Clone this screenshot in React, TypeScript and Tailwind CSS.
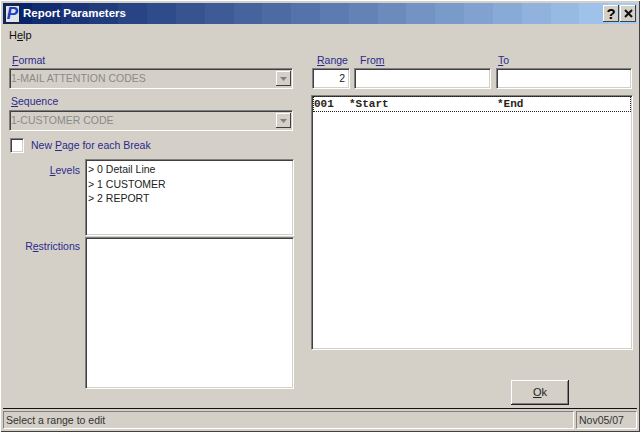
import React from 'react';

const sunken = 'border border-t-[#808080] border-l-[#808080] border-r-white border-b-white shadow-[inset_1px_1px_0_#404040,inset_-1px_-1px_0_#d4d0c8]';
const labelColor = 'text-[#2a2a8c]';

// title bar fades in visible bands, like a 256 colour capture
const bandCount = 22;
const titleBands = Array.from({ length: bandCount }, (_, i) => {
  const t = i / (bandCount - 1);
  const r = Math.round(10 + (166 - 10) * t);
  const g = Math.round(36 + (202 - 36) * t);
  const b = Math.round(106 + (240 - 106) * t);
  const from = (i / bandCount) * 100;
  const to = ((i + 1) / bandCount) * 100;
  return `rgb(${r},${g},${b}) ${from}% ${to}%`;
}).join(',');

const Field = ({ text, className }: { text?: string; className: string }) => (
  <div className={`${sunken} bg-white h-[21px] px-1 leading-[19px] text-right ${className}`}>{text}</div>
);

const Combo = ({ text }: { text: string }) => (
  <div className={`${sunken} bg-[#d4d0c8] h-[21px] w-[284px] ml-[6px] flex items-center justify-between pl-[1px] pr-[1px] text-[10.5px] text-[#8a8a86]`}>
    <span>{text}</span>
    <span className="w-[15px] h-[15px] bg-[#d4d0c8] flex items-center justify-center shadow-[inset_-1px_-1px_0_#404040,inset_1px_1px_0_#fff]">
      <svg width="7" height="4" viewBox="0 0 7 4"><path d="M0 0h7L3.5 4z" fill="#808080" /></svg>
    </span>
  </div>
);

const TitleButton = ({ children }: { children: React.ReactNode }) => (
  <div className="w-[16px] h-[17px] bg-[#d4d0c8] flex items-center justify-center shadow-[inset_-1px_-1px_0_#404040,inset_1px_1px_0_#fff] text-black font-bold text-[15px] leading-none">
    {children}
  </div>
);

export default function App() {
  return (
    <div className="w-[640px] h-[432px] overflow-hidden flex flex-col bg-[#d4d0c8] p-[3px] text-[10.5px] text-[#222] shadow-[inset_1px_1px_0_#fff,inset_-1px_-1px_0_#404040]" style={{ fontFamily: '"Liberation Sans", Arial, sans-serif' }}>
      {/* title bar */}
      <div className="h-[21px] shrink-0 flex items-center pl-[2px] pr-[1px]" style={{ backgroundImage: `linear-gradient(to right,${titleBands})` }}>
        <div className="w-[15px] h-[18px] bg-[#dfe3ee] border border-[#222] flex items-center justify-center">
          <span className="text-[#1a3fc0] font-bold italic text-[17px] leading-none">P</span>
        </div>
        <span className="ml-[3px] text-white font-bold text-[11.5px]">Report Parameters</span>
        <div className="ml-auto flex gap-[1px]">
          <TitleButton>?</TitleButton>
          <TitleButton>
            <svg width="9" height="9" viewBox="0 0 9 9"><path d="M1 1l7 7M8 1L1 8" stroke="#111" strokeWidth="2" /></svg>
          </TitleButton>
        </div>
      </div>

      {/* menu */}
      <div className="h-[21px] shrink-0 pl-[6px] pt-[2px] flex items-center text-[11px] text-[#111]">
        <span>H<span className="underline">e</span>lp</span>
      </div>

      {/* body */}
      <div className="flex-1 flex min-h-0">
        {/* left column */}
        <div className="w-[305px] shrink-0 pt-[8px]">
          <div className={`ml-[9px] h-[14px] leading-[14px] ${labelColor}`}><span className="underline">F</span>ormat</div>
          <div className="mt-[1px]"><Combo text="1-MAIL ATTENTION CODES" /></div>
          <div className={`ml-[8px] mt-[5px] h-[15px] leading-[15px] ${labelColor}`}><span className="underline">S</span>equence</div>
          <div className="mt-[1px]"><Combo text="1-CUSTOMER CODE" /></div>
          <div className="flex items-center ml-[7px] mt-[6px] h-[17px]">
            <div className={`${sunken} bg-white w-[14px] h-[15px]`} />
            <span className={`ml-[7px] ${labelColor}`}>New <span className="underline">P</span>age for each Break</span>
          </div>
          <div className="flex mt-[5px]">
            <div className={`w-[77px] text-right pt-[4px] ${labelColor}`}><span className="underline">L</span>evels</div>
            <div className={`${sunken} bg-white ml-[5px] w-[209px] h-[77px] pl-[2px] pt-[2px] leading-[15px] text-[#222]`}>
              <div>&gt; 0 Detail Line</div>
              <div>&gt; 1 CUSTOMER</div>
              <div className="-mt-[1px]">&gt; 2 REPORT</div>
            </div>
          </div>
          <div className="flex mt-[1px]">
            <div className={`w-[77px] text-right pt-[2px] ${labelColor}`}>R<span className="underline">e</span>strictions</div>
            <div className={`${sunken} bg-white ml-[5px] w-[209px] h-[152px]`} />
          </div>
        </div>

        {/* right column */}
        <div className="flex-1 min-w-0 pl-[3px] pr-[4px] pt-[8px] flex flex-col">
          <div className={`flex h-[14px] leading-[14px] ${labelColor}`}>
            <span className="ml-[6px] w-[43px]"><span className="underline">R</span>ange</span>
            <span className="w-[138px]">Fro<span className="underline">m</span></span>
            <span><span className="underline">T</span>o</span>
          </div>
          <div className="flex mt-[1px] ml-[1px]">
            <Field text="2" className="w-[38px] text-[#222]" />
            <Field className="w-[137px] ml-[4px]" />
            <Field className="w-[136px] ml-[5px]" />
          </div>
          <div className={`${sunken} bg-white mt-[6px] w-[322px] h-[255px] px-[1px]`}>
            <div className="h-[16px] border border-dotted border-[#222] flex items-center font-bold text-[11px] text-[#2a2418]" style={{ fontFamily: '"Liberation Mono", "Courier New", monospace' }}>
              <span className="w-[35px]">001</span>
              <span className="w-[148px]">*Start</span>
              <span>*End</span>
            </div>
          </div>
          <div className="mt-[30px] ml-[200px] w-[58px] h-[25px] flex items-center justify-center text-[11px] text-[#222] bg-[#d4d0c8] shadow-[inset_-1px_-1px_0_#222,inset_1px_1px_0_#fff,inset_-2px_-2px_0_#808080]">
            <span><span className="underline">O</span>k</span>
          </div>
        </div>
      </div>

      {/* status bar */}
      <div className="h-[21px] shrink-0 border-t border-[#111] flex gap-[2px] pt-[2px] text-[#333]">
        <div className="flex-1 border border-t-[#808080] border-l-[#808080] border-r-white border-b-white pl-[2px] leading-[17px]">Select a range to edit</div>
        <div className="w-[61px] border border-t-[#808080] border-l-[#808080] border-r-white border-b-white pl-[2px] leading-[17px]">Nov05/07</div>
      </div>
    </div>
  );
}
